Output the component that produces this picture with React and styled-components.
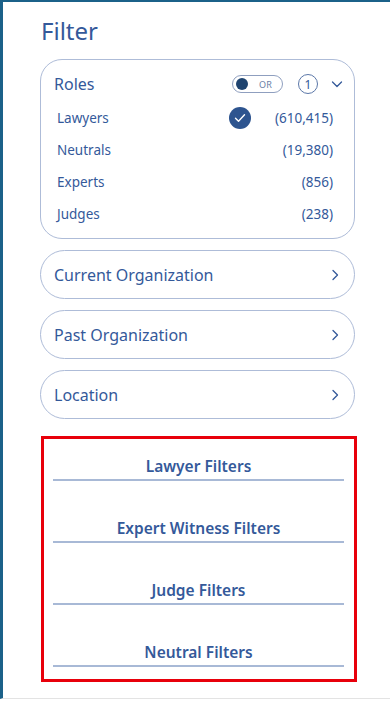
import React from 'react'
import styled, { createGlobalStyle } from 'styled-components'

const Global = createGlobalStyle`
    body {
        margin: 0;
        background: #fff;
        font-family: "Noto Sans", "Open Sans", sans-serif;
    }
`

const Panel = styled.aside`
    box-sizing: border-box;
    height: 699px;
    border-top: 2px solid #1b6189;
    border-left: 3px solid #1b6189;
    border-bottom: 1px solid #e3e3e3;
    padding: 13px 35px 0 37px;
    color: #34599a;
`

const Title = styled.h1`
    margin: 0 0 12px 1px;
    font-size: 24px;
    font-weight: 400;
    line-height: 32px;
`

const Card = styled.div`
    box-sizing: border-box;
    border: 1px solid #aebcd8;
    border-radius: 22px;
    padding: 9px 11px 8px 13px;
    margin-bottom: 11px;
`

const CardHead = styled.div`
    display: flex;
    align-items: center;
    height: 30px;
    margin-bottom: 3px;
`

const CardTitle = styled.span`
    flex: 1;
    font-size: 16px;
`

const Toggle = styled.div`
    box-sizing: border-box;
    width: 51px;
    height: 18px;
    border: 1px solid #8f9fbf;
    border-radius: 9px;
    display: flex;
    align-items: center;
    padding-left: 3px;
    gap: 11px;
    margin-right: 15px;
`

const Knob = styled.span`
    width: 12px;
    height: 12px;
    border-radius: 50%;
    background: #1f4470;
`

const ToggleText = styled.span`
    font-size: 9px;
    color: #6a7ea6;
    letter-spacing: 0.3px;
`

const Count = styled.span`
    box-sizing: border-box;
    width: 20px;
    height: 20px;
    border: 1px solid #5b77a8;
    border-radius: 50%;
    font-size: 12px;
    display: flex;
    align-items: center;
    justify-content: center;
    margin-right: 13px;
`

const List = styled.ul`
    list-style: none;
    margin: 0;
    padding: 0 10px 0 3px;
`

const Row = styled.li`
    display: flex;
    align-items: center;
    height: 32px;
    font-size: 13.5px;
`

const RowLabel = styled.span`
    flex: 1;
`

const Check = styled.span`
    width: 22px;
    height: 22px;
    border-radius: 50%;
    background: #2d548f;
    display: flex;
    align-items: center;
    justify-content: center;
    margin-right: 24px;
`

const Pill = styled.button`
    box-sizing: border-box;
    width: 100%;
    height: 49px;
    border: 1px solid #aebcd8;
    border-radius: 25px;
    background: #fff;
    display: flex;
    align-items: center;
    justify-content: space-between;
    padding: 0 13px 0 13px;
    margin-bottom: 11px;
    font-family: inherit;
    font-size: 16px;
    color: #34599a;
    cursor: pointer;
`

const Highlight = styled.section`
    box-sizing: border-box;
    border: 3px solid #e8000b;
    margin: 17px -2px 0 1px;
    padding: 16px 10px 12px 9px;
    display: flex;
    flex-direction: column;
    gap: 36px;
`

const Section = styled.div`
    text-align: center;
    font-size: 15.5px;
    font-weight: 600;
    line-height: 22px;
    padding-bottom: 2px;
    border-bottom: 2px solid #a8b9d6;
`

const roles = [
    { name: 'Lawyers', count: '(610,415)', checked: true },
    { name: 'Neutrals', count: '(19,380)' },
    { name: 'Experts', count: '(856)' },
    { name: 'Judges', count: '(238)' },
]

const Chevron = ({ dir }) => (
    <svg width="12" height="12" viewBox="0 0 12 12" fill="none" stroke="#34599a" strokeWidth="1.3" strokeLinecap="round" strokeLinejoin="round">
        {dir === 'down' ? <path d="M1.5 4l4.5 4.5 4.5-4.5" /> : <path d="M4 1.5l4.5 4.5-4.5 4.5" />}
    </svg>
)

const App = () => {
    return (
        <>
            <Global />
            <Panel>
                <Title>Filter</Title>
                <Card>
                    <CardHead>
                        <CardTitle>Roles</CardTitle>
                        <Toggle>
                            <Knob />
                            <ToggleText>OR</ToggleText>
                        </Toggle>
                        <Count>1</Count>
                        <Chevron dir="down" />
                    </CardHead>
                    <List>
                        {roles.map(r => (
                            <Row key={r.name}>
                                <RowLabel>{r.name}</RowLabel>
                                {r.checked && (
                                    <Check>
                                        <svg width="12" height="10" viewBox="0 0 12 10" fill="none" stroke="#fff" strokeWidth="1.4" strokeLinecap="round" strokeLinejoin="round">
                                            <path d="M1.5 5.2l3 3 6-6.5" />
                                        </svg>
                                    </Check>
                                )}
                                <span>{r.count}</span>
                            </Row>
                        ))}
                    </List>
                </Card>
                {['Current Organization', 'Past Organization', 'Location'].map(p => (
                    <Pill key={p}>
                        {p}
                        <Chevron />
                    </Pill>
                ))}
                <Highlight>
                    {['Lawyer Filters', 'Expert Witness Filters', 'Judge Filters', 'Neutral Filters'].map(s => (
                        <Section key={s}>{s}</Section>
                    ))}
                </Highlight>
            </Panel>
        </>
    )
}

export default App
